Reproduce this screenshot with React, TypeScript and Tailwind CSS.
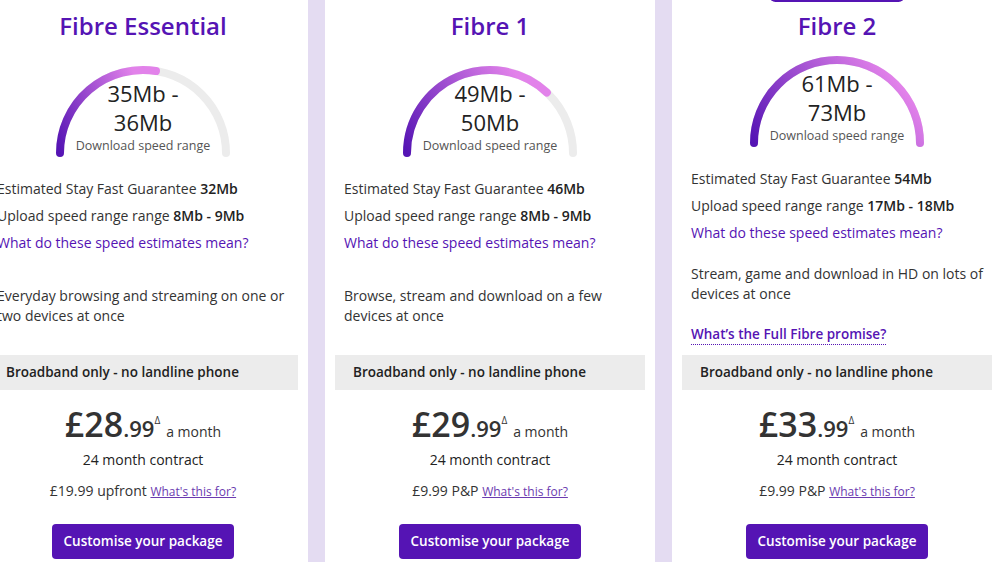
import React from "react";

type Plan = {
  title: string;
  speedTop: string;
  speedBottom: string;
  fill: number;
  guarantee: string;
  upload: string;
  desc: [string, string];
  price: string;
  upfront: string;
  featured?: boolean;
};

const plans: Plan[] = [
  {
    title: "Fibre Essential",
    speedTop: "35Mb -",
    speedBottom: "36Mb",
    fill: 0.55,
    guarantee: "32Mb",
    upload: "8Mb - 9Mb",
    desc: ["Everyday browsing and streaming on one or", "two devices at once"],
    price: "28",
    upfront: "£19.99 upfront",
  },
  {
    title: "Fibre 1",
    speedTop: "49Mb -",
    speedBottom: "50Mb",
    fill: 0.74,
    guarantee: "46Mb",
    upload: "8Mb - 9Mb",
    desc: ["Browse, stream and download on a few", "devices at once"],
    price: "29",
    upfront: "£9.99 P&P",
  },
  {
    title: "Fibre 2",
    speedTop: "61Mb -",
    speedBottom: "73Mb",
    fill: 1,
    guarantee: "54Mb",
    upload: "17Mb - 18Mb",
    desc: ["Stream, game and download in HD on lots of", "devices at once"],
    price: "33",
    upfront: "£9.99 P&P",
    featured: true,
  },
];

function Gauge({ id, fill, top, bottom }: { id: string; fill: number; top: string; bottom: string }) {
  const cx = 92;
  const cy = 91;
  const r = 83;
  const angle = Math.PI - fill * Math.PI;
  const ex = cx + r * Math.cos(angle);
  const ey = cy - r * Math.sin(angle);

  return (
    <div className="relative mx-auto h-[100px] w-[184px]">
      <svg width="184" height="100" viewBox="0 0 184 100">
        <defs>
          <linearGradient id={id} x1="0" y1="1" x2="1" y2="0.6">
            <stop offset="0%" stopColor="#5514b4" />
            <stop offset="100%" stopColor="#e282ea" />
          </linearGradient>
        </defs>
        <path
          d={`M ${cx - r} ${cy} A ${r} ${r} 0 0 1 ${cx + r} ${cy}`}
          fill="none"
          stroke="#ececec"
          strokeWidth="8"
          strokeLinecap="round"
        />
        <path
          d={`M ${cx - r} ${cy} A ${r} ${r} 0 0 1 ${ex} ${ey}`}
          fill="none"
          stroke={`url(#${id})`}
          strokeWidth="8"
          strokeLinecap="round"
        />
      </svg>
      <div className="absolute inset-x-0 top-[17px] text-center">
        <div className="text-[22px] leading-[29px] text-[#222]">{top}</div>
        <div className="text-[22px] leading-[29px] text-[#222]">{bottom}</div>
        <div className="mt-[1px] text-[12.5px] leading-[16px] text-[#555]">Download speed range</div>
      </div>
    </div>
  );
}

function PlanCard({ plan, index }: { plan: Plan; index: number }) {
  const featured = !!plan.featured;

  return (
    <div className="relative flex w-[330px] shrink-0 flex-col bg-white">
      {featured ? (
        <div className="absolute left-1/2 top-[-20px] h-[22px] w-[135px] -translate-x-1/2 rounded-[6px] bg-[#5514b4]" />
      ) : null}

      {/* Title */}
      <h2 className="pt-[10px] text-center text-[24px] leading-[32px] font-semibold text-[#5514b4]">
        {plan.title}
      </h2>

      <div className={featured ? "mt-[10px]" : "mt-[20px]"}>
        <Gauge id={`gauge-${index}`} fill={plan.fill} top={plan.speedTop} bottom={plan.speedBottom} />
      </div>

      {/* Speed details */}
      <div className="mt-[13px] px-[19px] text-[14px] leading-[27px] text-[#333]">
        <p>
          Estimated Stay Fast Guarantee <span className="font-semibold text-[#222]">{plan.guarantee}</span>
        </p>
        <p>
          Upload speed range range <span className="font-semibold text-[#222]">{plan.upload}</span>
        </p>
        <p className="text-[#5514b4]">What do these speed estimates mean?</p>
      </div>

      <p
        className={`${featured ? "mt-[18px]" : "mt-[30px]"} whitespace-nowrap px-[19px] text-[14px] leading-[20px] text-[#333]`}
      >
        {plan.desc[0]}
        <br />
        {plan.desc[1]}
      </p>

      {featured ? (
        <div className="mt-[20px] flex px-[19px]">
          <span className="border-b border-dotted border-[#5514b4] text-[13.5px] leading-[20px] font-semibold text-[#5514b4]">
            What’s the Full Fibre promise?
          </span>
        </div>
      ) : null}

      {/* Bundle bar */}
      <div
        className={`${featured ? "mt-[10px]" : "mt-[29px]"} mx-[10px] flex h-[35px] items-center bg-[#ececec] pl-[18px] text-[13.5px] font-semibold text-[#222]`}
      >
        Broadband only - no landline phone
      </div>

      {/* Price */}
      <div className="mt-[14px] flex items-baseline justify-center text-[#333]">
        <span className="text-[34px] leading-[40px] font-semibold">£{plan.price}</span>
        <span className="text-[22px] leading-[40px] font-semibold">.99</span>
        <span className="self-start pt-[10px] text-[10px] leading-[12px]">Δ</span>
        <span className="ml-[6px] text-[14px] leading-[20px]">a month</span>
      </div>
      <p className="mt-[2px] text-center text-[14px] leading-[20px] text-[#222]">24 month contract</p>
      <p className="mt-[11px] text-center text-[14px] leading-[20px] text-[#333]">
        {plan.upfront}{" "}
        <span className="text-[12px] text-[#6b3bb0] underline">What's this for?</span>
      </p>

      <button
        type="button"
        className="mx-auto mt-[22px] h-[35px] w-[182px] rounded-[4px] bg-[#5514b4] text-[13.5px] font-semibold text-white"
      >
        Customise your package
      </button>
    </div>
  );
}

export default function App() {
  return (
    <div className="h-[562px] w-full overflow-hidden bg-[#e4dcf2] font-['Open_Sans','Liberation_Sans',sans-serif]">
      <div className="-ml-[22px] flex h-full w-max gap-[17px]">
        {plans.map((p, i) => (
          <PlanCard key={p.title} plan={p} index={i} />
        ))}
      </div>
    </div>
  );
}
